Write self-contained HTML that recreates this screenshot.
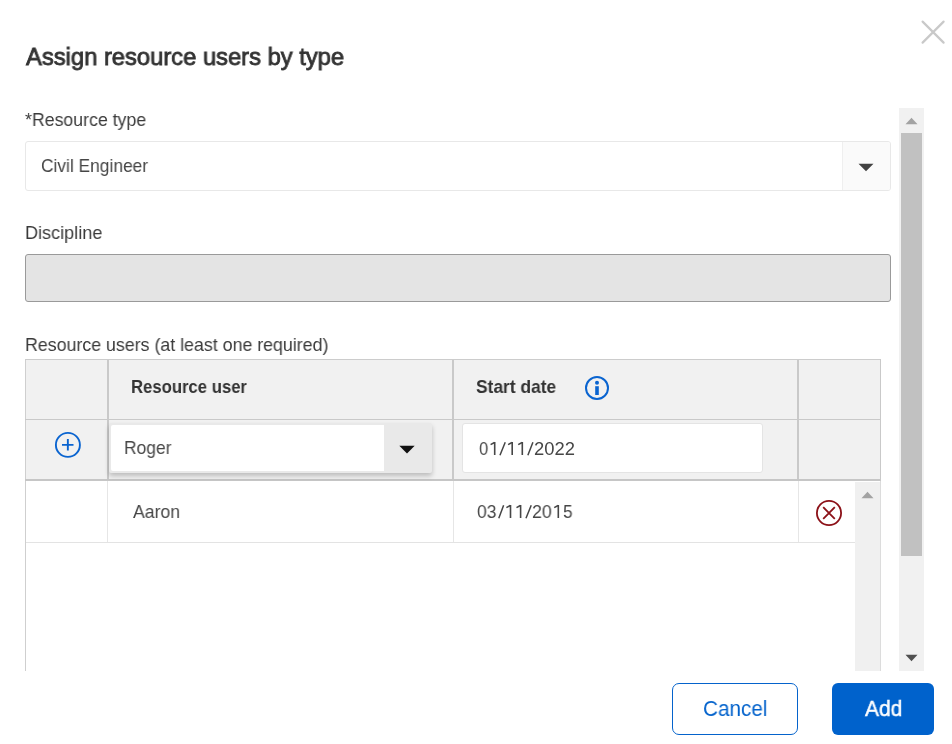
<!DOCTYPE html>
<html><head><meta charset="utf-8"><style>
html,body{margin:0;padding:0;background:#fff;width:952px;height:744px;overflow:hidden;position:relative}
.a{position:absolute;box-sizing:content-box}
.t{position:absolute;white-space:nowrap;font-family:"Liberation Sans",sans-serif;will-change:transform;transform-origin:0 0}
.sl{padding:0 2px}
</style></head><body>
<svg class="a" style="left:918px;top:17px" width="30" height="30" viewBox="0 0 30 30"><path d="M4.6 4.6 L25.6 25.6 M25.6 4.6 L4.6 25.6" stroke="#c9c9c9" stroke-width="2.2" stroke-linecap="round"/></svg>
<div class="a" style="left:25px;top:141px;width:864px;height:48px;border:1px solid #e8e8e8;border-radius:3px;background:#fff"></div>
<div class="a" style="left:842px;top:142px;width:47px;height:48px;border-left:1px solid #efefef;border-radius:0 2px 2px 0;background:#fafafa"></div>
<svg class="a" style="left:858px;top:163px" width="16" height="9" viewBox="0 0 16 9"><path d="M0.5 0.8 L15.5 0.8 L8 8.3 Z" fill="#424242"/></svg>
<div class="a" style="left:25px;top:254px;width:864px;height:46px;border:1px solid #9a9a9a;border-radius:3px;background:#e4e4e4"></div>
<div class="a" style="left:25px;top:359px;width:1px;height:312px;background:#cfcfcf"></div>
<div class="a" style="left:26px;top:360px;width:854px;height:119px;background:#f1f1f1"></div>
<div class="a" style="left:25px;top:359px;width:856px;height:1px;background:#cccccc"></div>
<div class="a" style="left:25px;top:419px;width:856px;height:1px;background:#c9c9c9"></div>
<div class="a" style="left:25px;top:479px;width:856px;height:2px;background:#c6c6c6"></div>
<div class="a" style="left:880px;top:359px;width:1px;height:122px;background:#c9c9c9"></div>
<div class="a" style="left:880px;top:481px;width:1px;height:190px;background:#dcdcdc"></div>
<div class="a" style="left:107px;top:360px;width:2px;height:119px;background:#c9c9c9"></div>
<div class="a" style="left:452px;top:360px;width:2px;height:119px;background:#c9c9c9"></div>
<div class="a" style="left:797px;top:360px;width:2px;height:119px;background:#c9c9c9"></div>
<div class="a" style="left:107px;top:481px;width:1px;height:61px;background:#e6e6e6"></div>
<div class="a" style="left:453px;top:481px;width:1px;height:61px;background:#e6e6e6"></div>
<div class="a" style="left:798px;top:481px;width:1px;height:61px;background:#e6e6e6"></div>
<div class="a" style="left:26px;top:542px;width:829px;height:1px;background:#e3e3e3"></div>
<svg class="a" style="left:583px;top:374px" width="28" height="28" viewBox="0 0 28 28"><circle cx="14" cy="14" r="11" fill="none" stroke="#0a64d0" stroke-width="2"/><circle cx="14" cy="8.8" r="2" fill="#0a64d0"/><rect x="12.2" y="12.2" width="3.6" height="8.8" fill="#0a64d0"/></svg>
<svg class="a" style="left:54px;top:431px" width="28" height="28" viewBox="0 0 28 28"><circle cx="13.9" cy="13.9" r="12" fill="none" stroke="#0a64d0" stroke-width="1.9"/><path d="M8 13.9 H19.5 M13.85 8 V19.4" stroke="#0a64d0" stroke-width="1.9"/></svg>
<div class="a" style="left:109px;top:423px;width:323px;height:50px;background:#e9e9e9;border-radius:2px;box-shadow:0 3px 5px rgba(0,0,0,0.22)"></div>
<div class="a" style="left:111px;top:425px;width:273px;height:46px;background:#fff;border-radius:2px 0 0 2px"></div>
<svg class="a" style="left:399px;top:445px" width="16" height="9" viewBox="0 0 16 9"><path d="M0.3 0.8 L15.7 0.8 L8 8.5 Z" fill="#111"/></svg>
<div class="a" style="left:462px;top:423px;width:299px;height:48px;border:1px solid #e4e4e4;border-radius:3px;background:#fff"></div>
<svg class="a" style="left:815px;top:499px" width="28" height="28" viewBox="0 0 28 28"><circle cx="14" cy="14" r="12.1" fill="none" stroke="#8c1118" stroke-width="1.8"/><path d="M8.2 8.2 L19.8 19.8 M19.8 8.2 L8.2 19.8" stroke="#8c1118" stroke-width="1.8"/></svg>
<svg class="a" style="left:470px;top:436px" width="110" height="26" viewBox="0 0 110 26"><path d="M29.97 19.17 L35.23 6.33 M57.87 19.17 L62.93 6.33 " stroke="#464646" stroke-width="1.5" fill="none"/><rect x="23.90" y="6.00" width="1.6" height="13.00" fill="#464646"/><path d="M24.50 6.50 L20.60 8.60" stroke="#464646" stroke-width="1.6"/><rect x="41.40" y="6.00" width="1.6" height="13.00" fill="#464646"/><path d="M42.00 6.50 L38.10 8.60" stroke="#464646" stroke-width="1.6"/><rect x="51.50" y="6.00" width="1.6" height="13.00" fill="#464646"/><path d="M52.10 6.50 L48.20 8.60" stroke="#464646" stroke-width="1.6"/></svg>
<svg class="a" style="left:470px;top:499px" width="110" height="26" viewBox="0 0 110 26"><path d="M28.77 19.17 L33.63 6.33 M55.97 19.17 L61.23 6.33 " stroke="#464646" stroke-width="1.5" fill="none"/><rect x="39.70" y="6.00" width="1.6" height="13.00" fill="#464646"/><path d="M40.30 6.50 L36.40 8.60" stroke="#464646" stroke-width="1.6"/><rect x="49.80" y="6.00" width="1.6" height="13.00" fill="#464646"/><path d="M50.40 6.50 L46.50 8.60" stroke="#464646" stroke-width="1.6"/><rect x="87.50" y="6.00" width="1.6" height="13.00" fill="#464646"/><path d="M88.10 6.50 L84.20 8.60" stroke="#464646" stroke-width="1.6"/></svg>
<div class="a" style="left:855px;top:482px;width:25px;height:189px;background:#f0f0f0"></div>
<svg class="a" style="left:861px;top:491px" width="13" height="8" viewBox="0 0 13 8"><path d="M0.5 7.2 L12.5 7.2 L6.5 0.8 Z" fill="#a3a3a3"/></svg>
<div class="a" style="left:899px;top:108px;width:25px;height:563px;background:#f1f1f1"></div>
<div class="a" style="left:901px;top:133px;width:21px;height:423px;background:#c1c1c1"></div>
<svg class="a" style="left:905px;top:117px" width="13" height="8" viewBox="0 0 13 8"><path d="M0.5 7.2 L12.5 7.2 L6.5 0.8 Z" fill="#a3a3a3"/></svg>
<svg class="a" style="left:905px;top:654px" width="13" height="8" viewBox="0 0 13 8"><path d="M0.5 0.8 L12.5 0.8 L6.5 7.2 Z" fill="#505050"/></svg>
<div class="a" style="left:672px;top:683px;width:124px;height:50px;border:1px solid #0463cc;border-radius:7px;background:#fff"></div>
<div class="a" style="left:832px;top:683px;width:102px;height:52px;border-radius:6px;background:#0062cc"></div>
<div class="t" id="title" style="left:25.94px;top:43px;font-size:24.6px;font-weight:400;color:#333;line-height:27px;transform:scaleX(0.9657);-webkit-text-stroke:0.85px #333;">Assign resource users by type</div>
<div class="t" id="restype" style="left:24.80px;top:109px;font-size:18.4px;font-weight:400;color:#3a3a3a;line-height:21px;transform:scaleX(0.9636);">*Resource type</div>
<div class="t" id="civil" style="left:40.87px;top:155px;font-size:18.4px;font-weight:400;color:#464646;line-height:21px;transform:scaleX(0.9438);">Civil Engineer</div>
<div class="t" id="disc" style="left:24.78px;top:222px;font-size:18.4px;font-weight:400;color:#3a3a3a;line-height:21px;transform:scaleX(0.9831);">Discipline</div>
<div class="t" id="resusers" style="left:24.60px;top:334px;font-size:18.4px;font-weight:400;color:#3a3a3a;line-height:21px;transform:scaleX(0.9667);">Resource users (at least one required)</div>
<div class="t" id="resuserH" style="left:131.37px;top:376px;font-size:18.4px;font-weight:700;color:#333;line-height:21px;transform:scaleX(0.9073);">Resource user</div>
<div class="t" id="startH" style="left:476.28px;top:376px;font-size:18.4px;font-weight:700;color:#333;line-height:21px;transform:scaleX(0.9454);">Start date</div>
<div class="t" id="roger" style="left:124.06px;top:437px;font-size:18.4px;font-weight:400;color:#464646;line-height:21px;transform:scaleX(0.9473);">Roger</div>
<div class="t" id="d1a" style="left:479.47px;top:438px;font-size:18.4px;font-weight:400;color:#464646;line-height:21px;transform:scaleX(0.9090);">0</div>
<div class="t" id="d1b" style="left:533.60px;top:438px;font-size:18.4px;font-weight:400;color:#464646;line-height:21px;transform:scaleX(0.9882);">2022</div>
<div class="t" id="aaron" style="left:132.62px;top:501px;font-size:18.4px;font-weight:400;color:#464646;line-height:21px;transform:scaleX(0.9612);">Aaron</div>
<div class="t" id="d2a" style="left:477.11px;top:501px;font-size:18.4px;font-weight:400;color:#464646;line-height:21px;transform:scaleX(0.9513);">03</div>
<div class="t" id="d2b" style="left:532.04px;top:501px;font-size:18.4px;font-weight:400;color:#464646;line-height:21px;transform:scaleX(0.9646);">20</div>
<div class="t" id="d2c" style="left:562.88px;top:501px;font-size:18.4px;font-weight:400;color:#464646;line-height:21px;transform:scaleX(0.9336);">5</div>
<div class="t" id="cancel" style="left:703.03px;top:697px;font-size:21.3px;font-weight:400;color:#0463cc;line-height:24px;transform:scaleX(0.9718);">Cancel</div>
<div class="t" id="add" style="left:865.09px;top:696px;font-size:22.0px;font-weight:400;color:#fff;line-height:25px;transform:scaleX(0.9518);-webkit-text-stroke:0.45px #fff;">Add</div>
</body></html>
